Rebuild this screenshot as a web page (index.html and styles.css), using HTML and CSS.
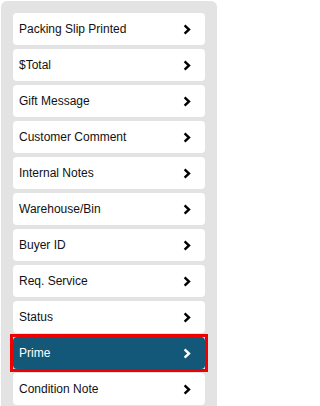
FILE: index.html
```html
<!DOCTYPE html>
<html>
<head>
<meta charset="utf-8">
<link rel="stylesheet" href="styles.css">
</head>
<body>
<div class="panel">
  <div class="item"><span>Packing Slip Printed</span><svg class="chev" viewBox="0 0 8 11"><path d="M1.6 1.4 L6 5.5 L1.6 9.6"/></svg></div>
  <div class="item"><span>$Total</span><svg class="chev" viewBox="0 0 8 11"><path d="M1.6 1.4 L6 5.5 L1.6 9.6"/></svg></div>
  <div class="item"><span>Gift Message</span><svg class="chev" viewBox="0 0 8 11"><path d="M1.6 1.4 L6 5.5 L1.6 9.6"/></svg></div>
  <div class="item"><span>Customer Comment</span><svg class="chev" viewBox="0 0 8 11"><path d="M1.6 1.4 L6 5.5 L1.6 9.6"/></svg></div>
  <div class="item"><span>Internal Notes</span><svg class="chev" viewBox="0 0 8 11"><path d="M1.6 1.4 L6 5.5 L1.6 9.6"/></svg></div>
  <div class="item"><span>Warehouse/Bin</span><svg class="chev" viewBox="0 0 8 11"><path d="M1.6 1.4 L6 5.5 L1.6 9.6"/></svg></div>
  <div class="item"><span>Buyer ID</span><svg class="chev" viewBox="0 0 8 11"><path d="M1.6 1.4 L6 5.5 L1.6 9.6"/></svg></div>
  <div class="item"><span>Req. Service</span><svg class="chev" viewBox="0 0 8 11"><path d="M1.6 1.4 L6 5.5 L1.6 9.6"/></svg></div>
  <div class="item"><span>Status</span><svg class="chev" viewBox="0 0 8 11"><path d="M1.6 1.4 L6 5.5 L1.6 9.6"/></svg></div>
  <div class="item active"><span>Prime</span><svg class="chev" viewBox="0 0 8 11"><path d="M1.6 1.4 L6 5.5 L1.6 9.6"/></svg></div>
  <div class="item"><span>Condition Note</span><svg class="chev" viewBox="0 0 8 11"><path d="M1.6 1.4 L6 5.5 L1.6 9.6"/></svg></div>
</div>
</body>
</html>
```
FILE: styles.css
```css
html, body {
  margin: 0;
  padding: 0;
  background: #ffffff;
}
body {
  font-family: "Liberation Sans", Arial, sans-serif;
  overflow: hidden;
  width: 218px;
  height: 406px;
}
.panel {
  margin: 1px 1px 0 1px;
  width: 216px;
  height: 405px;
  box-sizing: border-box;
  background: #e3e3e3;
  border-radius: 6px 6px 0 0;
  padding: 12px 11px 0 12px;
  display: flex;
  flex-direction: column;
  gap: 4px;
  overflow: hidden;
}
.item {
  position: relative;
  flex: 0 0 32px;
  width: 192px;
  height: 32px;
  box-sizing: border-box;
  background: #ffffff;
  border-radius: 4px;
  display: flex;
  align-items: center;
  justify-content: space-between;
  padding: 0 14px 0 6px;
  font-size: 12px;
  color: #111111;
}
.item.active {
  background: #135878;
  color: #ffffff;
}
.item.active::before {
  content: "";
  position: absolute;
  left: -3px;
  top: -3px;
  right: -3px;
  bottom: -3px;
  border: 3px solid #ee0000;
  pointer-events: none;
}
.chev {
  width: 8px;
  height: 11px;
  fill: none;
  stroke: #000000;
  stroke-width: 2.4;
  stroke-linejoin: miter;
  stroke-linecap: butt;
}
.item.active .chev {
  stroke: #ffffff;
}
```
